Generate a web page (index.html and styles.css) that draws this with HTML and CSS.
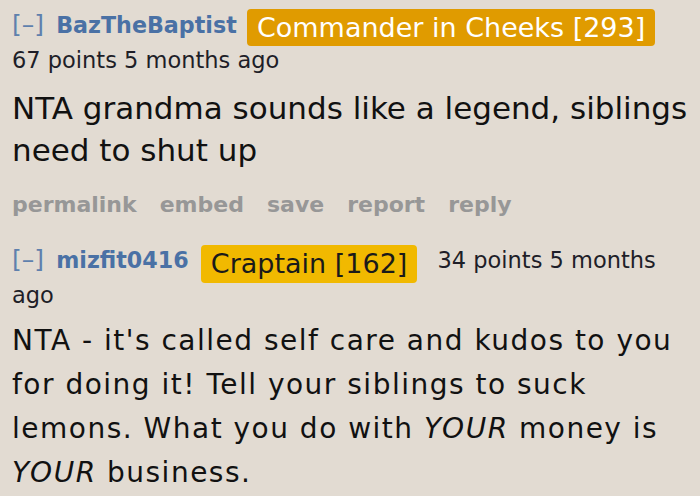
FILE: index.html
```html
<!DOCTYPE html>
<html>
<head>
<meta charset="utf-8">
<link rel="stylesheet" href="styles.css">
</head>
<body>
<div class="comment">
  <p class="tagline"><span class="expand">[–]</span> <a class="author">BazTheBaptist</a> <span class="flair flair-orange">Commander in Cheeks [293]</span> <span class="score">67 points</span> <span class="time">5 months ago</span></p>
  <div class="body body-one">
    <p>NTA grandma sounds like a legend, siblings need to shut up</p>
  </div>
  <ul class="buttons">
    <li>permalink</li>
    <li>embed</li>
    <li>save</li>
    <li>report</li>
    <li>reply</li>
  </ul>
</div>
<div class="comment comment-next">
  <p class="tagline"><span class="expand">[–]</span> <a class="author">mizfit0416</a> <span class="flair flair-yellow">Craptain [162]</span> <span class="score">34 points</span> <span class="time">5 months ago</span></p>
  <div class="body body-two">
    <p>NTA - it's called self care and kudos to you for doing it! Tell your siblings to suck lemons. What you do with <em>YOUR</em> money is <em>YOUR</em> business.</p>
  </div>
</div>
</body>
</html>
```
FILE: styles.css
```css
html, body {
  margin: 0;
  padding: 0;
  background: #e2dbd2;
}
body {
  font-family: "DejaVu Sans", Verdana, sans-serif;
  color: #111;
  padding: 0 0 0 12px;
  width: 688px;
  overflow: hidden;
  height: 496px;
}
.comment-next {
  margin-top: 15px;
}
.tagline {
  margin: 0;
  padding-top: 7px;
  font-size: 22.5px;
  line-height: 35px;
  color: #1e1e28;
}
.expand {
  color: #5f80ad;
  font-size: 25px;
  margin-right: 5px;
}
.author {
  color: #4a71a5;
  font-weight: bold;
  font-size: 22.2px;
}
.score {
  white-space: nowrap;
}
.flair {
  display: inline-block;
  border-radius: 4px;
  padding: 0 10px;
  line-height: 37px;
  font-size: 27px;
  margin-left: 3px;
  margin-right: 13px;
  margin-bottom: -4px;
  vertical-align: -4px;
}
.flair-orange {
  background: #e09b00;
  color: #fff;
}
.flair-yellow {
  background: #f1b900;
  color: #1a1a1a;
  margin-left: 5px;
  vertical-align: -5px;
  margin-bottom: -5px;
  line-height: 38px;
}
.body {
  margin-top: 9px;
}
.body p {
  margin: 0;
}
.body-one p {
  font-size: 31px;
  line-height: 42px;
}
.body-two {
  margin-top: 6px;
}
.body-two p {
  font-size: 28px;
  line-height: 44px;
  letter-spacing: 1.5px;
}
.buttons {
  list-style: none;
  margin: 19px 0 0 0;
  padding: 0;
  display: flex;
  gap: 23px;
  font-weight: bold;
  font-size: 22px;
  line-height: 30px;
  color: #979797;
}
```
